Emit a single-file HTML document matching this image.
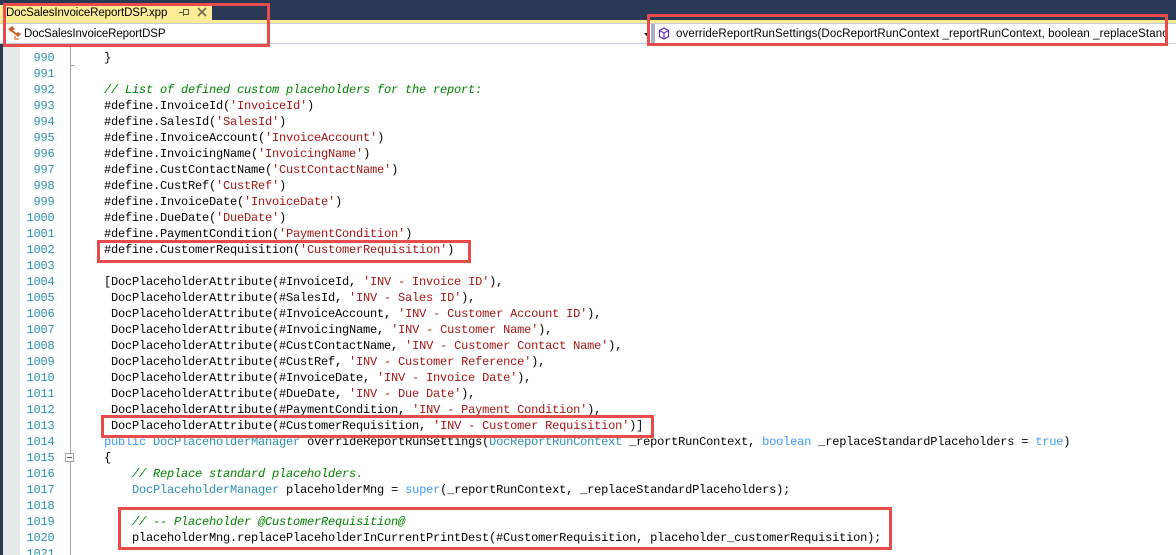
<!DOCTYPE html>
<html><head><meta charset="utf-8">
<style>
html,body{margin:0;padding:0;background:#fff}
#p{position:relative;width:1176px;height:555px;overflow:hidden;background:#fff}
.a{position:absolute}
.c,.n{position:absolute;font-family:"Liberation Mono",monospace;font-size:12px;letter-spacing:-.2px;line-height:16px;height:16px;white-space:pre;color:#000}
.n{left:20px;width:34.5px;text-align:right;color:#2b91af}
.u{font-family:"Liberation Sans",sans-serif;font-size:11.5px;white-space:pre;color:#000;position:absolute;line-height:16px}
.r{position:absolute;border:3px solid #e84c4a;box-sizing:border-box}
i{font-style:italic;color:#008000}
s{text-decoration:none;color:#a31515}
b{font-weight:normal;color:#3c9cf5}
u{text-decoration:none;color:#2b91af}
</style></head><body><div id="p">
<div class="a" style="left:0;top:0;width:1176px;height:22px;background:#293955"></div>
<div class="a" style="left:0;top:5px;width:212px;height:17px;background:#fdeb96"></div>
<div class="a" style="left:0;top:20px;width:1176px;height:3px;background:#fdeb96"></div>
<div class="a" style="left:0;top:23px;width:1176px;height:21px;background:#fff;border-top:1px solid #c2c8d6;border-bottom:1px solid #c2c8d6;box-sizing:border-box"></div>
<div class="u" style="left:6px;top:5px;letter-spacing:-.1px">DocSalesInvoiceReportDSP.xpp</div>
<svg class="a" style="left:178px;top:7px" width="12" height="11" viewBox="0 0 12 11"><path d="M1 5.500h4M5.500 2v7M5.500 2.500h5M5.500 7.500h5M10.500 2v6" fill="none" stroke="#5b5b48"/></svg>
<svg class="a" style="left:196px;top:6px" width="12" height="12" viewBox="0 0 12 12"><path d="M2 2l8 8M10 2l-8 8" fill="none" stroke="#6d6a50" stroke-width="1.600"/></svg>
<svg class="a" style="left:7px;top:25px" width="15" height="16" viewBox="0 0 15 16"><path d="M1 4l4-3 3 3-4 3zM8 9l3-2 3 2-3 3z" fill="#c8622f"/><path d="M5 6l4 3" stroke="#c8622f" stroke-width="2"/><path d="M8 11v3h4" fill="none" stroke="#d98a50" stroke-width="1.500"/></svg>
<div class="u" style="left:24px;top:26px;letter-spacing:-.1px">DocSalesInvoiceReportDSP</div>
<svg class="a" style="left:643px;top:32px" width="8" height="5" viewBox="0 0 8 5"><path d="M1 1h5L3.500 4z" fill="#222"/></svg>
<div class="a" style="left:651px;top:24px;width:4px;height:19px;background:#a9b2c4"></div>
<svg class="a" style="left:658px;top:27px" width="12" height="13" viewBox="0 0 12 13"><path d="M6 1l4.500 2.500v6L6 12l-4.500-2.500v-6zM1.500 3.500L6 6l4.500-2.500M6 6v6" fill="none" stroke="#6a2bb5" stroke-width="1.200"/></svg>
<div class="u" style="left:676px;top:26px;letter-spacing:.11px;width:489px;overflow:hidden">overrideReportRunSettings(DocReportRunContext _reportRunContext, boolean _replaceStandardPlaceholders = true)</div>

<div class="a" style="left:0;top:44px;width:3px;height:511px;background:#293955"></div>
<div class="a" style="left:3px;top:44px;width:17px;height:511px;background:#e6e7e8"></div>
<div class="a" style="left:70px;top:44px;width:1px;height:511px;background:#a5a5a5"></div>
<div class="a" style="left:71px;top:65px;width:4px;height:1px;background:#a5a5a5"></div>
<div class="a" style="left:65px;top:453px;width:9px;height:9px;background:#fff;border:1px solid #a5a5a5;box-sizing:border-box"></div>
<div class="a" style="left:67px;top:457px;width:5px;height:1px;background:#555"></div>

<div class="n" style="top:50px">990</div><div class="c" style="left:104px;top:50px">}</div>
<div class="n" style="top:66px">991</div>
<div class="n" style="top:82px">992</div><div class="c" style="left:104px;top:82px"><i>// List of defined custom placeholders for the report:</i></div>
<div class="n" style="top:98px">993</div><div class="c" style="left:104px;top:98px">#define.InvoiceId(<s>'InvoiceId'</s>)</div>
<div class="n" style="top:114px">994</div><div class="c" style="left:104px;top:114px">#define.SalesId(<s>'SalesId'</s>)</div>
<div class="n" style="top:130px">995</div><div class="c" style="left:104px;top:130px">#define.InvoiceAccount(<s>'InvoiceAccount'</s>)</div>
<div class="n" style="top:146px">996</div><div class="c" style="left:104px;top:146px">#define.InvoicingName(<s>'InvoicingName'</s>)</div>
<div class="n" style="top:162px">997</div><div class="c" style="left:104px;top:162px">#define.CustContactName(<s>'CustContactName'</s>)</div>
<div class="n" style="top:178px">998</div><div class="c" style="left:104px;top:178px">#define.CustRef(<s>'CustRef'</s>)</div>
<div class="n" style="top:194px">999</div><div class="c" style="left:104px;top:194px">#define.InvoiceDate(<s>'InvoiceDate'</s>)</div>
<div class="n" style="top:210px">1000</div><div class="c" style="left:104px;top:210px">#define.DueDate(<s>'DueDate'</s>)</div>
<div class="n" style="top:226px">1001</div><div class="c" style="left:104px;top:226px">#define.PaymentCondition(<s>'PaymentCondition'</s>)</div>
<div class="n" style="top:242px">1002</div><div class="c" style="left:104px;top:242px">#define.CustomerRequisition(<s>'CustomerRequisition'</s>)</div>
<div class="n" style="top:258px">1003</div>
<div class="n" style="top:274px">1004</div><div class="c" style="left:104px;top:274px">[DocPlaceholderAttribute(#InvoiceId, <s>'INV - Invoice ID'</s>),</div>
<div class="n" style="top:290px">1005</div><div class="c" style="left:104px;top:290px"> DocPlaceholderAttribute(#SalesId, <s>'INV - Sales ID'</s>),</div>
<div class="n" style="top:306px">1006</div><div class="c" style="left:104px;top:306px"> DocPlaceholderAttribute(#InvoiceAccount, <s>'INV - Customer Account ID'</s>),</div>
<div class="n" style="top:322px">1007</div><div class="c" style="left:104px;top:322px"> DocPlaceholderAttribute(#InvoicingName, <s>'INV - Customer Name'</s>),</div>
<div class="n" style="top:338px">1008</div><div class="c" style="left:104px;top:338px"> DocPlaceholderAttribute(#CustContactName, <s>'INV - Customer Contact Name'</s>),</div>
<div class="n" style="top:354px">1009</div><div class="c" style="left:104px;top:354px"> DocPlaceholderAttribute(#CustRef, <s>'INV - Customer Reference'</s>),</div>
<div class="n" style="top:370px">1010</div><div class="c" style="left:104px;top:370px"> DocPlaceholderAttribute(#InvoiceDate, <s>'INV - Invoice Date'</s>),</div>
<div class="n" style="top:386px">1011</div><div class="c" style="left:104px;top:386px"> DocPlaceholderAttribute(#DueDate, <s>'INV - Due Date'</s>),</div>
<div class="n" style="top:402px">1012</div><div class="c" style="left:104px;top:402px"> DocPlaceholderAttribute(#PaymentCondition, <s>'INV - Payment Condition'</s>),</div>
<div class="n" style="top:418px">1013</div><div class="c" style="left:104px;top:418px"> DocPlaceholderAttribute(#CustomerRequisition, <s>'INV - Customer Requisition'</s>)]</div>
<div class="n" style="top:434px">1014</div><div class="c" style="left:104px;top:434px"><b>public</b> <u>DocPlaceholderManager</u> overrideReportRunSettings(<u>DocReportRunContext</u> _reportRunContext, <b>boolean</b> _replaceStandardPlaceholders = <b>true</b>)</div>
<div class="n" style="top:450px">1015</div><div class="c" style="left:104px;top:450px">{</div>
<div class="n" style="top:466px">1016</div><div class="c" style="left:132px;top:466px"><i>// Replace standard placeholders.</i></div>
<div class="n" style="top:482px">1017</div><div class="c" style="left:132px;top:482px"><u>DocPlaceholderManager</u> placeholderMng = <b>super</b>(_reportRunContext, _replaceStandardPlaceholders);</div>
<div class="n" style="top:498px">1018</div>
<div class="n" style="top:514px">1019</div><div class="c" style="left:132px;top:514px"><i>// -- Placeholder @CustomerRequisition@</i></div>
<div class="n" style="top:530px">1020</div><div class="c" style="left:132px;top:530px">placeholderMng.replacePlaceholderInCurrentPrintDest(#CustomerRequisition, placeholder_customerRequisition);</div>
<div class="n" style="top:546px">1021</div>

<div class="r" style="left:3px;top:3px;width:267px;height:44px"></div>
<div class="r" style="left:647px;top:14px;width:521px;height:32px"></div>
<div class="r" style="left:97px;top:240px;width:374px;height:23px"></div>
<div class="r" style="left:101px;top:415px;width:553px;height:23px"></div>
<div class="r" style="left:118px;top:507px;width:774px;height:43px"></div>
</div></body></html>
